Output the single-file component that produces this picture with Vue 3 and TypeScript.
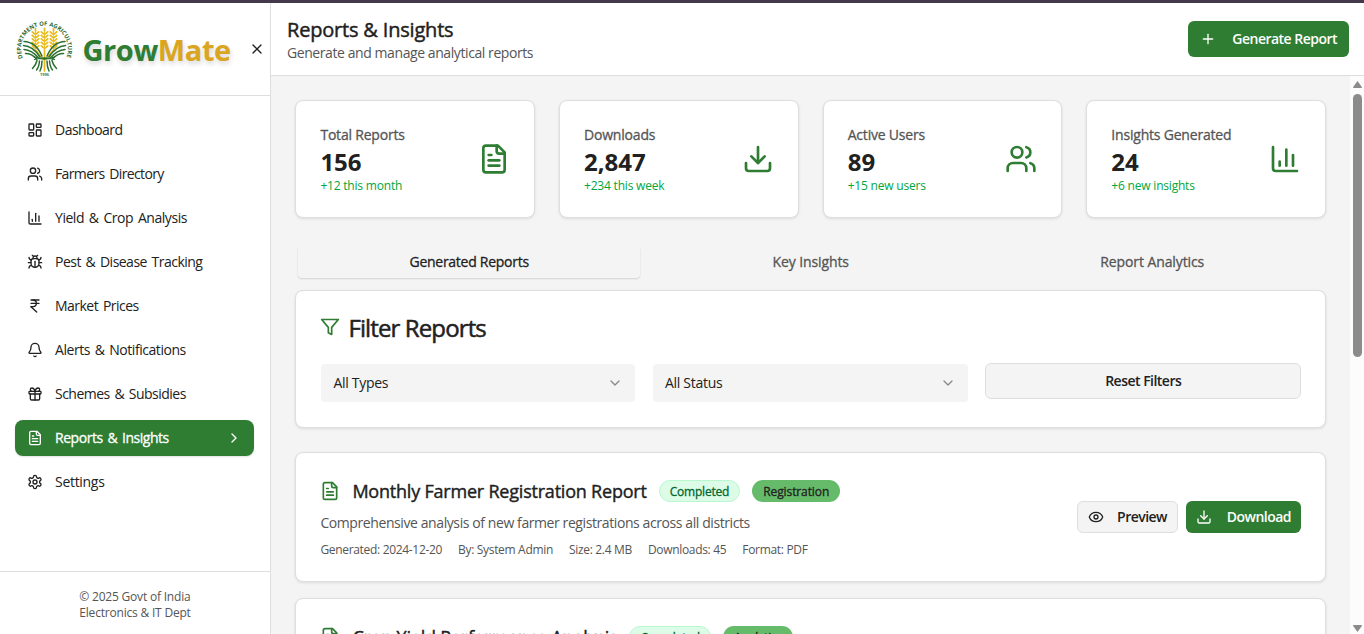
<script setup lang="ts">
import { h, type FunctionalComponent } from 'vue'

const icons: Record<string, string> = {
  dashboard: '<rect width="7" height="9" x="3" y="3" rx="1"/><rect width="7" height="5" x="14" y="3" rx="1"/><rect width="7" height="9" x="14" y="12" rx="1"/><rect width="7" height="5" x="3" y="16" rx="1"/>',
  users: '<path d="M16 21v-2a4 4 0 0 0-4-4H6a4 4 0 0 0-4 4v2"/><path d="M16 3.128a4 4 0 0 1 0 7.744"/><path d="M22 21v-2a4 4 0 0 0-3-3.87"/><circle cx="9" cy="7" r="4"/>',
  chart: '<path d="M3 3v16a2 2 0 0 0 2 2h16"/><path d="M18 17V9"/><path d="M13 17V5"/><path d="M8 17v-3"/>',
  bug: '<path d="m8 2 1.88 1.88"/><path d="M14.12 3.88 16 2"/><path d="M9 7.13v-1a3.003 3.003 0 1 1 6 0v1"/><path d="M12 20c-3.3 0-6-2.7-6-6v-3a4 4 0 0 1 4-4h4a4 4 0 0 1 4 4v3c0 3.3-2.7 6-6 6"/><path d="M12 20v-9"/><path d="M6.53 9C4.6 8.8 3 7.1 3 5"/><path d="M6 13H2"/><path d="M3 21c0-2.1 1.7-3.9 3.8-4"/><path d="M20.97 5c0 2.1-1.6 3.8-3.5 4"/><path d="M22 13h-4"/><path d="M17.2 17c2.1.1 3.8 1.9 3.8 4"/>',
  rupee: '<path d="M6 3h12"/><path d="M6 8h12"/><path d="m6 13 8.5 8"/><path d="M6 13h3"/><path d="M9 13c6.667 0 6.667-10 0-10"/>',
  bell: '<path d="M10.268 21a2 2 0 0 0 3.464 0"/><path d="M3.262 15.326A1 1 0 0 0 4 17h16a1 1 0 0 0 .74-1.673C19.41 13.956 18 12.499 18 8A6 6 0 0 0 6 8c0 4.499-1.411 5.956-2.738 7.326"/>',
  gift: '<rect x="3" y="8" width="18" height="4" rx="1"/><path d="M12 8v13"/><path d="M19 12v7a2 2 0 0 1-2 2H7a2 2 0 0 1-2-2v-7"/><path d="M7.5 8a2.5 2.5 0 0 1 0-5A4.8 8 0 0 1 12 8a4.8 8 0 0 1 4.5-5 2.5 2.5 0 0 1 0 5"/>',
  file: '<path d="M15 2H6a2 2 0 0 0-2 2v16a2 2 0 0 0 2 2h12a2 2 0 0 0 2-2V7Z"/><path d="M14 2v4a2 2 0 0 0 2 2h4"/><path d="M10 9H8"/><path d="M16 13H8"/><path d="M16 17H8"/>',
  settings: '<path d="M12.22 2h-.44a2 2 0 0 0-2 2v.18a2 2 0 0 1-1 1.73l-.43.25a2 2 0 0 1-2 0l-.15-.08a2 2 0 0 0-2.73.73l-.22.38a2 2 0 0 0 .73 2.73l.15.1a2 2 0 0 1 1 1.72v.51a2 2 0 0 1-1 1.74l-.15.09a2 2 0 0 0-.73 2.73l.22.38a2 2 0 0 0 2.73.73l.15-.08a2 2 0 0 1 2 0l.43.25a2 2 0 0 1 1 1.73V20a2 2 0 0 0 2 2h.44a2 2 0 0 0 2-2v-.18a2 2 0 0 1 1-1.73l.43-.25a2 2 0 0 1 2 0l.15.08a2 2 0 0 0 2.73-.73l.22-.39a2 2 0 0 0-.73-2.73l-.15-.08a2 2 0 0 1-1-1.74v-.5a2 2 0 0 1 1-1.74l.15-.09a2 2 0 0 0 .73-2.73l-.22-.38a2 2 0 0 0-2.73-.73l-.15.08a2 2 0 0 1-2 0l-.43-.25a2 2 0 0 1-1-1.73V4a2 2 0 0 0-2-2z"/><circle cx="12" cy="12" r="3"/>',
  right: '<path d="m9 18 6-6-6-6"/>',
  down: '<path d="m6 9 6 6 6-6"/>',
  x: '<path d="M18 6 6 18"/><path d="m6 6 12 12"/>',
  plus: '<path d="M5 12h14"/><path d="M12 5v14"/>',
  download: '<path d="M12 15V3"/><path d="M21 15v4a2 2 0 0 1-2 2H5a2 2 0 0 1-2-2v-4"/><path d="m7 10 5 5 5-5"/>',
  filter: '<path d="M22 3H2l8 9.46V19l4 2v-8.54z"/>',
  eye: '<path d="M2.062 12.348a1 1 0 0 1 0-.696 10.75 10.75 0 0 1 19.876 0 1 1 0 0 1 0 .696 10.75 10.75 0 0 1-19.876 0"/><circle cx="12" cy="12" r="3"/>',
}

const Icon: FunctionalComponent<{ name: string; size?: number }> = (props) =>
  h('svg', {
    width: props.size ?? 16,
    height: props.size ?? 16,
    viewBox: '0 0 24 24',
    fill: 'none',
    stroke: 'currentColor',
    'stroke-width': 2,
    'stroke-linecap': 'round',
    'stroke-linejoin': 'round',
    innerHTML: icons[props.name],
  })
Icon.props = ['name', 'size']

const nav = [
  { label: 'Dashboard', icon: 'dashboard' },
  { label: 'Farmers Directory', icon: 'users' },
  { label: 'Yield & Crop Analysis', icon: 'chart' },
  { label: 'Pest & Disease Tracking', icon: 'bug' },
  { label: 'Market Prices', icon: 'rupee' },
  { label: 'Alerts & Notifications', icon: 'bell' },
  { label: 'Schemes & Subsidies', icon: 'gift' },
  { label: 'Reports & Insights', icon: 'file', active: true },
  { label: 'Settings', icon: 'settings' },
]

const stats = [
  { label: 'Total Reports', value: '156', note: '+12 this month', icon: 'file' },
  { label: 'Downloads', value: '2,847', note: '+234 this week', icon: 'download' },
  { label: 'Active Users', value: '89', note: '+15 new users', icon: 'users' },
  { label: 'Insights Generated', value: '24', note: '+6 new insights', icon: 'chart' },
]

const tabs = ['Generated Reports', 'Key Insights', 'Report Analytics']

const reports = [
  {
    title: 'Monthly Farmer Registration Report',
    status: 'Completed',
    type: 'Registration',
    text: 'Comprehensive analysis of new farmer registrations across all districts',
    meta: ['Generated: 2024-12-20', 'By: System Admin', 'Size: 2.4 MB', 'Downloads: 45', 'Format: PDF'],
  },
  {
    title: 'Crop Yield Performance Analysis',
    status: 'Completed',
    type: 'Analytics',
    text: '',
    meta: [],
  },
]
</script>

<template>
  <div class="window">
    <div class="strip"></div>
    <div class="shell">
      <aside class="sidebar">
        <div class="brand">
          <svg class="emblem" width="58" height="58" viewBox="0 0 58 58" fill="none">
            <path id="ring" d="M8 38.600A23.500 23.500 0 1 1 51 38.600" />
            <text class="ring-text">
              <textPath href="#ring" textLength="91" startOffset="0.500">DEPARTMENT OF AGRICULTURE</textPath>
            </text>
            <g stroke="#e8bb1c" stroke-linecap="round">
              <g v-for="e in [20.5, 29.5, 38.5]" :key="e">
                <path :d="`M${e} 12V31`" stroke-width=".9" />
                <path :d="`M${e} 8.5v2.500`" stroke-width="1.8" />
                <path
                  v-for="k in 5"
                  :key="k"
                  :d="`M${e - 3.2} ${8.4 + k * 3.5}l2.3 2M${e + 3.2} ${8.4 + k * 3.5}l-2.3 2`"
                  stroke-width="1.8"
                />
              </g>
              <path d="M20.500 30Q24 34 28 39M38.500 30Q35 34 31 39M29.500 30V51" stroke-width="1.7" />
            </g>
            <g stroke="#2b7030" stroke-width="1.5" stroke-linecap="round">
              <path d="M9 21.500Q21 22 27 36M8.500 25.500Q18 26 25 37M9 29.500Q17 30 23.500 38M10.500 33.500Q17 33.500 21.500 39" />
              <path d="M50 21.500Q38 22 32 36M50.500 25.500Q41 26 34 37M50 29.500Q42 30 35.500 38M48.500 33.500Q42 33.500 37.500 39" />
              <path d="M19.500 37Q29.500 41 39.500 37M19.500 39.500Q29.500 36.500 39.500 39.500" stroke-width="1.3" />
              <path d="M22 40.500Q21 45 17.500 48.500M24.500 41Q24 47 21.500 50M27 41Q27 47 25 51M37 40.500Q38 45 41.500 48.500M34.500 41Q35 47 37.500 50M32 41Q32 47 34 51" />
            </g>
            <text class="year" x="29.5" y="55.500" text-anchor="middle">1996</text>
          </svg>
          <div class="wordmark"><span class="grow">Grow</span><span class="mate">Mate</span></div>
          <Icon class="close" name="x" />
        </div>
        <nav class="nav">
          <a v-for="n in nav" :key="n.label" class="nav-item" :class="{ active: n.active }">
            <Icon :name="n.icon" />
            <span>{{ n.label }}</span>
            <Icon v-if="n.active" class="chev" name="right" />
          </a>
        </nav>
        <footer class="side-foot"><div>© 2025 Govt of India<br />Electronics &amp; IT Dept</div></footer>
      </aside>

      <main class="main">
        <header class="topbar">
          <div>
            <h1>Reports &amp; Insights</h1>
            <p>Generate and manage analytical reports</p>
          </div>
          <button class="btn primary generate"><Icon name="plus" /><span>Generate Report</span></button>
        </header>
        <div class="body">
          <div class="content">
            <section class="stats">
              <div v-for="s in stats" :key="s.label" class="card stat">
                <div>
                  <div class="stat-label">{{ s.label }}</div>
                  <div class="stat-value">{{ s.value }}</div>
                  <div class="stat-note">{{ s.note }}</div>
                </div>
                <Icon :name="s.icon" :size="32" />
              </div>
            </section>

            <div class="tabs">
              <div v-for="(t, i) in tabs" :key="t" class="tab" :class="{ on: i === 0 }">{{ t }}</div>
            </div>

            <section class="card filter">
              <h2><Icon name="filter" :size="20" /><span>Filter Reports</span></h2>
              <div class="filter-row">
                <div class="select"><span>All Types</span><Icon name="down" /></div>
                <div class="select"><span>All Status</span><Icon name="down" /></div>
                <button class="btn outline reset">Reset Filters</button>
              </div>
            </section>

            <article v-for="r in reports" :key="r.title" class="card report">
              <div class="info">
                <div class="head">
                  <Icon name="file" :size="20" />
                  <h3>{{ r.title }}</h3>
                  <span class="badge done">{{ r.status }}</span>
                  <span class="badge kind">{{ r.type }}</span>
                </div>
                <p class="text">{{ r.text }}</p>
                <div class="meta"><span v-for="m in r.meta" :key="m">{{ m }}</span></div>
              </div>
              <div v-if="r.text" class="actions">
                <button class="btn outline small"><Icon name="eye" /><span>Preview</span></button>
                <button class="btn primary small"><Icon name="download" /><span>Download</span></button>
              </div>
            </article>
          </div>
          <div class="scrollbar">
            <svg width="9" height="7" viewBox="0 0 9 7"><path d="M4.500 0 9 6.200 8.500 7h-8L0 6.200z" fill="#8b8b8b" /></svg>
            <div class="thumb"></div>
            <svg class="arrow-end" width="9" height="7" viewBox="0 0 9 7"><path d="M4.500 7 9 .8 8.500 0h-8L0 .8z" fill="#8b8b8b" /></svg>
          </div>
        </div>
      </main>
    </div>
  </div>
</template>

<style>
body { margin: 0; overflow: hidden; }
</style>

<style scoped>
* { box-sizing: border-box; }
.window {
  height: 634px; width: 1364px; overflow: hidden; display: flex; flex-direction: column;
  font-family: "Open Sans", "Noto Sans", sans-serif; font-size: 14px; line-height: 20px;
  color: #212121; background: #f4f4f4;
}
svg { flex: none; display: block; }
h1, h2, h3, p { margin: 0; }
.strip { height: 3px; flex: none; background: #43394b; }
.shell { flex: 1; min-height: 0; display: flex; }

.sidebar { width: 271px; flex: none; background: #fff; border-right: 1px solid #dedede; display: flex; flex-direction: column; }
.brand { height: 93px; flex: none; border-bottom: 1px solid #dedede; display: flex; align-items: center; padding-left: 15px; }
.emblem { overflow: visible; }
.ring-text { font: 700 5.8px "Open Sans", sans-serif; fill: #2b6a30; }
.year { font: 700 4px "Open Sans", sans-serif; fill: #4c7d4f; }
.wordmark {
  margin: 2px 0 0 9.5px; width: 148.5px; font-size: 29px; line-height: 36px; font-weight: 700; letter-spacing: -0.4px;
  text-shadow: 1px 3px 5px rgba(0, 0, 0, .16); white-space: nowrap;
}
.grow { color: #2e7d32; }
.mate { color: #daa520; }
.close { margin-left: 18px; }
.nav { flex: 1; padding: 16px 16px 0 15px; display: flex; flex-direction: column; gap: 8px; }
.nav-item { height: 36px; display: flex; align-items: center; padding: 0 12px; border-radius: 8px; gap: 12px; letter-spacing: -0.52px; word-spacing: 1.6px; white-space: nowrap; }
.nav-item:nth-child(3), .nav-item:nth-child(6) { letter-spacing: -0.45px; }
.nav-item:last-child { letter-spacing: -0.3px; }
.nav-item:nth-child(2) { letter-spacing: -0.62px; }
.nav-item.active { background: #2e7d32; color: #fff; letter-spacing: -0.46px; -webkit-text-stroke: .3px; box-shadow: 0 1px 2px rgba(0, 0, 0, .12); }
.chev { margin-left: auto; }
.side-foot { height: 63px; flex: none; border-top: 1px solid #dedede; padding-top: 17px; display: flex; justify-content: center; font-size: 12px; line-height: 16px; color: #555; letter-spacing: -0.2px; }

.main { flex: 1; min-width: 0; display: flex; flex-direction: column; }
.topbar { height: 73px; flex: none; background: #fff; border-bottom: 1px solid #dedede; display: flex; align-items: center; justify-content: space-between; padding: 0 15px 0 16px; }
.topbar h1 { font-size: 20px; line-height: 25px; margin-top: 1px; font-weight: 400; letter-spacing: -0.19px; -webkit-text-stroke: .45px; }
.topbar p { color: #555; height: 20px; line-height: 22px; letter-spacing: -0.42px; }
.btn { font: inherit; font-weight: 600; display: flex; align-items: center; border: 0; border-radius: 6px; margin: 0; white-space: nowrap; padding: 0; letter-spacing: -0.52px; }
.primary { background: #2e7d32; color: #fff; }
.outline { background: #f4f4f4; border: 1px solid #dedede; color: #212121; }
.generate { width: 161px; height: 36px; padding: 0 12px; justify-content: space-between; }

.body { flex: 1; min-height: 0; display: flex; }
.content { flex: 1; min-width: 0; padding: 24px 24px 24px 24.4px; overflow: hidden; }
.card { background: #fff; border: 1px solid #dedede; border-radius: 8px; box-shadow: 0 1px 3px rgba(0, 0, 0, .1); }
.stats { display: grid; grid-template-columns: repeat(4, 1fr); gap: 24px; }
.stat { height: 118px; padding: 0 24px; display: flex; align-items: center; justify-content: space-between; color: #2e7d32; }
.stat-label { color: #555; line-height: 20px; letter-spacing: -0.2px; -webkit-text-stroke: .3px; }
.stat-value { color: #212121; font-size: 24px; line-height: 32px; font-weight: 700; padding-top: 1px; height: 32px; }
.stat-note { color: #00a63e; font-size: 12px; height: 16px; line-height: 18px; letter-spacing: -0.2px; }
.tabs { margin-top: 24px; height: 40px; padding: 4px 3px; display: grid; grid-template-columns: repeat(3, 1fr); }
.tab { display: flex; align-items: center; justify-content: center; color: #555; border-radius: 4px; letter-spacing: -0.1px; -webkit-text-stroke: .3px; }
.tab.on { color: #212121; letter-spacing: -0.27px; box-shadow: 0 1px 2px rgba(0, 0, 0, .14); }
.filter { margin-top: 8px; height: 138px; padding: 24px; }
.filter h2 { display: flex; gap: 8px; font-size: 24px; line-height: 26px; height: 26px; font-weight: 400; letter-spacing: -0.88px; -webkit-text-stroke: .5px; }
.filter h2 svg { color: #2e7d32; margin-top: 2px; }
.filter-row { display: grid; grid-template-columns: repeat(3, 1fr); gap: 17px; margin-top: 22px; }
.select { height: 38px; margin-top: 1px; background: #f4f4f4; border-radius: 4px; display: flex; align-items: center; justify-content: space-between; padding: 0 12px; letter-spacing: -0.28px; }
.select:first-child { margin-left: 1px; margin-right: 1px; }
.select svg { color: #8a8a8a; }
.reset { height: 36px; justify-content: center; letter-spacing: -0.52px; }
.report { margin-top: 24px; height: 130px; padding: 24px; display: flex; justify-content: space-between; align-items: center; }
.report + .report { margin-top: 16px; }
.head { display: flex; align-items: center; height: 28px; gap: 12px; color: #2e7d32; white-space: nowrap; }
.head h3 { font-size: 18px; font-weight: 400; color: #212121; letter-spacing: -0.21px; -webkit-text-stroke: .4px; }
.badge { height: 22px; border-radius: 11px; padding: 1px 10px 0; font-size: 12px; line-height: 20px; border: 1px solid transparent; letter-spacing: -0.2px; -webkit-text-stroke: .3px; }
.done { background: #dcfce7; color: #016630; border-color: #b9f8cf; }
.kind { background: #66bb6a; color: #212121; letter-spacing: -0.1px; }
.text { color: #555; height: 20px; line-height: 20px; margin-top: 8px; white-space: nowrap; letter-spacing: -0.41px; }
.meta { display: flex; gap: 16px; color: #555; height: 16px; font-size: 12px; line-height: 18px; margin-top: 8px; white-space: nowrap; letter-spacing: -0.32px; }
.actions { display: flex; gap: 8px; }
.small { height: 32px; justify-content: space-between; padding: 0 10px; }
.small.outline { width: 101px; }
.small.primary { width: 115px; }
.scrollbar { width: 14px; flex: none; background: #fcfcfc; display: flex; flex-direction: column; align-items: center; padding: 5px 2px 2px 3px; }
.thumb { width: 9px; height: 263px; margin-top: 6px; border-radius: 5px; background: #8b8b8b; }
.arrow-end { margin-top: auto; }
</style>
